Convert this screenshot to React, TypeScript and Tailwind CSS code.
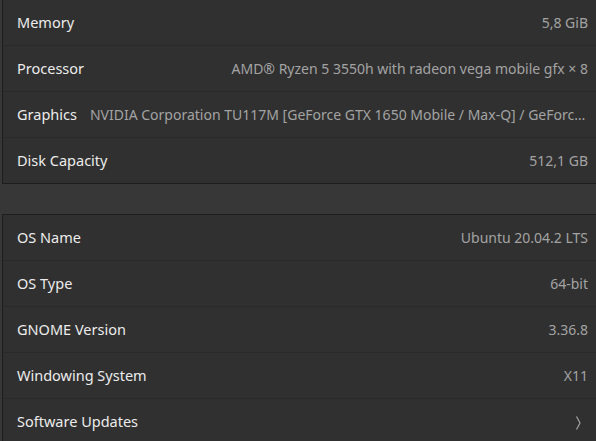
const hardware = [
  { label: "Memory", value: "5,8 GiB" },
  { label: "Processor", value: "AMD® Ryzen 5 3550h with radeon vega mobile gfx × 8" },
  {
    label: "Graphics",
    value:
      "NVIDIA Corporation TU117M [GeForce GTX 1650 Mobile / Max-Q] / GeForce GTX 1650 Mobile / Max-Q/PCIe/SSE2",
  },
  { label: "Disk Capacity", value: "512,1 GB" },
];

const software = [
  { label: "OS Name", value: "Ubuntu 20.04.2 LTS" },
  { label: "OS Type", value: "64-bit" },
  { label: "GNOME Version", value: "3.36.8" },
  { label: "Windowing System", value: "X11" },
];

const Row = ({ label, children }: { label: string; children: React.ReactNode }) => (
  <div className="flex h-[46px] items-center gap-[13px] border-t border-[#2a2a2a] pl-[14px] pr-[14px] first:h-[45px] first:border-t-0">
    <span className="shrink-0 text-[14.5px] text-[#ececec]">{label}</span>
    <div className="min-w-0 flex-1 truncate text-right text-[14px] text-[#a3a3a3]">{children}</div>
  </div>
);

const Card = ({ children, className = "" }: { children: React.ReactNode; className?: string }) => (
  <div className={`w-[601px] shrink-0 border border-[#1d1d1d] bg-[#303030] ${className}`}>{children}</div>
);

const App = () => {
  return (
    <div
      className="h-[441px] w-[596px] overflow-hidden bg-[#373737] pl-[2px]"
      style={{ fontFamily: '"Noto Sans", "Open Sans", sans-serif' }}
    >
      <Card className="-mt-px">
        {hardware.map((r) => (
          <Row key={r.label} label={r.label}>
            {r.value}
          </Row>
        ))}
      </Card>
      <Card className="mt-[30px]">
        {software.map((r) => (
          <Row key={r.label} label={r.label}>
            {r.value}
          </Row>
        ))}
        <Row label="Software Updates">
          <svg className="ml-auto mr-[6px] inline-block" width="7" height="16" viewBox="0 0 7 16" fill="none">
            <path d="M1.5 1.5 L5 8 L1.5 14.5" stroke="#a3a3a3" strokeWidth="1.2" />
          </svg>
        </Row>
      </Card>
    </div>
  );
};

export default App;
